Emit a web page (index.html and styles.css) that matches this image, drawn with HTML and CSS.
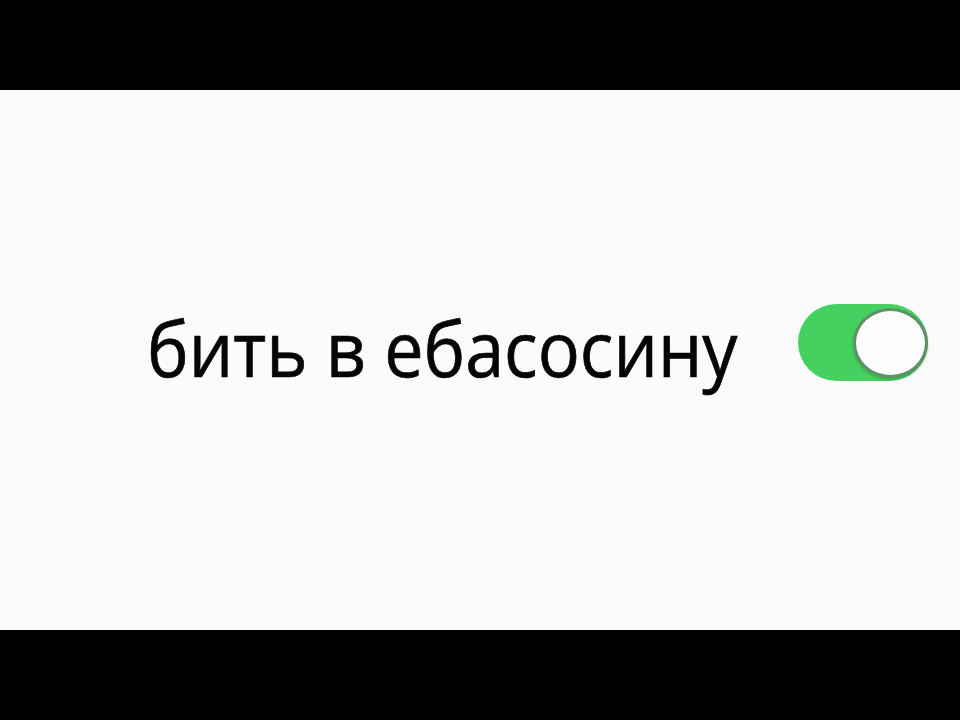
FILE: index.html
```html
<!DOCTYPE html>
<html lang="ru">
<head>
<meta charset="utf-8">
<link rel="stylesheet" href="styles.css">
</head>
<body>
<div class="bar"></div>
<main class="panel">
  <div class="row">
    <span class="label">бить в ебасосину</span>
    <div class="toggle"><div class="knob"></div></div>
  </div>
</main>
<div class="bar"></div>
</body>
</html>
```
FILE: styles.css
```css
html, body { margin: 0; padding: 0; background: #000; }
body { width: 960px; height: 720px; display: flex; flex-direction: column; }
.bar { height: 90px; background: #000; flex: none; }
.panel {
  height: 540px; flex: none; background: #fbfbfb; box-sizing: border-box;
  padding-top: 209px;
}
.row {
  display: flex; align-items: center; width: 960px; box-sizing: border-box;
  padding-left: 147px; padding-right: 32px;
}
.label {
  font-family: "Open Sans", "Noto Sans", sans-serif;
  font-size: 77px; color: #050505;
  line-height: 1; white-space: nowrap; flex: none;
  margin-top: 10px;
  -webkit-text-stroke: 0.7px #050505;
  transform: scaleX(0.91); transform-origin: left center;
}
.toggle {
  flex: none; margin-left: auto;
  width: 130px; height: 77px; border-radius: 39px;
  background: #44d15f; display: flex; align-items: center; justify-content: flex-end;
}
.knob {
  width: 75px; height: 70px; border-radius: 50%; background: #fdfdfd;
  border: 3px solid #5f9168; box-sizing: border-box;
  box-shadow: 0 2px 3px rgba(0,0,0,0.18);
}
```
